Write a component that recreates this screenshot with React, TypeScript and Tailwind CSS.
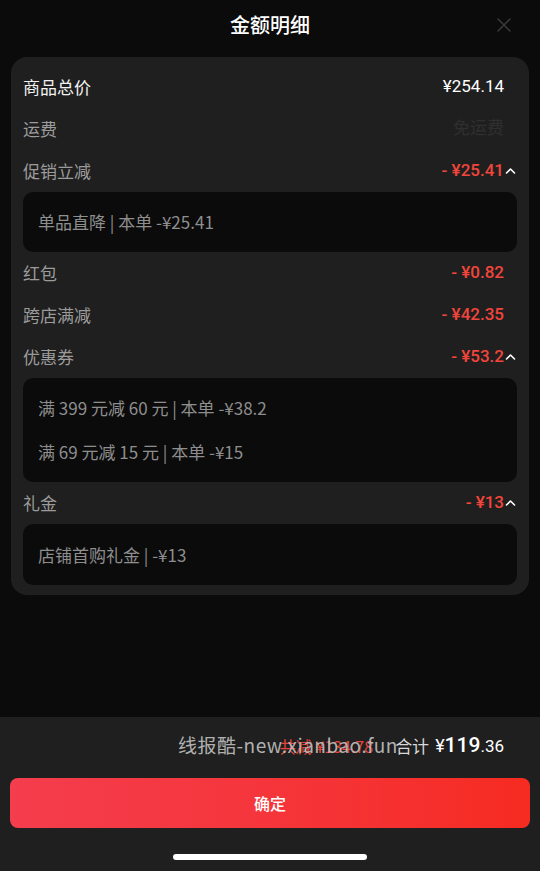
import { ReactNode } from "react";

const cjk = "font-['Noto_Sans_CJK_SC','Noto_Sans',sans-serif]";
const num = "font-['Roboto','Noto_Sans_CJK_SC',sans-serif]";

function Chevron() {
    return (
        <svg width="13" height="10" viewBox="0 0 13 10" className="shrink-0">
            <path d="M2.5 7 L6.5 3 L10.5 7" fill="none" stroke="#ffffff" strokeWidth="1.6" strokeLinecap="round" strokeLinejoin="round" />
        </svg>
    );
}

function Row({ label, value, strong, dim, red, open }: { label: string; value: string; strong?: boolean; dim?: boolean; red?: boolean; open?: boolean }) {
    return (
        <div className="h-[42px] flex items-center justify-between">
            <span className={`text-[17px] font-normal ${strong ? "text-[#f2f2f2]" : "text-[#9b9b9b]"}`}>{label}</span>
            <div className="flex items-center">
                <span
                    className={`${num} text-[17px] ${red ? "text-[#f2453b] font-medium" : dim ? "text-[#2f2f2f] " + cjk : "text-white"}`}
                >
                    {value}
                </span>
                {open ? <Chevron /> : <span className="w-[13px]" />}
            </div>
        </div>
    );
}

function Box({ children, className }: { children: ReactNode; className?: string }) {
    return (
        <div className={`rounded-[10px] bg-[#0b0b0b] px-[15px] text-[17px] text-[#8e8e8e] ${className ?? ""}`}>{children}</div>
    );
}

export default function App() {
    return (
        <div className={`${cjk} w-full h-[871px] bg-[#0b0b0b] flex flex-col overflow-hidden`}>
            {/* 标题 */}
            <div className="relative h-[50px] flex items-center justify-center">
                <h1 className="text-[20px] font-medium text-white">金额明细</h1>
                <svg className="absolute right-[28px] top-[17px]" width="16" height="16" viewBox="0 0 16 16">
                    <path d="M2 2 L14 14 M14 2 L2 14" stroke="#3a3a3a" strokeWidth="1.5" strokeLinecap="round" />
                </svg>
            </div>

            {/* 明细卡片 */}
            <div className="mx-[11px] mt-[7px] rounded-[16px] bg-[#1f1f1f] px-[12px] pt-[9px] pb-[10px]">
                <Row label="商品总价" value="¥254.14" strong />
                <Row label="运费" value="免运费" dim />
                <Row label="促销立减" value="- ¥25.41" red open />
                <Box className="h-[60px] flex items-center">单品直降 | 本单 -¥25.41</Box>
                <Row label="红包" value="- ¥0.82" red />
                <Row label="跨店满减" value="- ¥42.35" red />
                <Row label="优惠券" value="- ¥53.2" red open />
                <Box className="py-[8px]">
                    <div className="h-[44px] flex items-center">满 399 元减 60 元 | 本单 -¥38.2</div>
                    <div className="h-[44px] flex items-center">满 69 元减 15 元 | 本单 -¥15</div>
                </Box>
                <Row label="礼金" value="- ¥13" red open />
                <Box className="h-[61px] flex items-center">店铺首购礼金 | -¥13</Box>
            </div>

            <div className="flex-1" />

            {/* 底部结算 */}
            <div className="h-[154px] bg-[#1f1f1f] flex flex-col">
                <div className="relative h-[61px] flex items-center justify-end pr-[36px] pb-[4px]">
                    <span className="text-[16px] text-[#e5463c] mr-[22px]">共减 ¥134.78</span>
                    <span className="text-[17px] text-[#d8d8d8] mr-[6px]">合计</span>
                    <span className={`${num} text-white`}>
                        <span className="text-[18px]">¥</span>
                        <span className="text-[21px] font-medium">119</span>
                        <span className="text-[17px]">.36</span>
                    </span>
                    <span className="absolute left-[178px] top-[14px] text-[19px] text-[#c4c4c4]/90 tracking-[0.5px]">线报酷-new.xianbao.fun</span>
                </div>
                <div className="mx-[10px] h-[50px] rounded-[8px] bg-gradient-to-r from-[#f43d4d] to-[#f62b21] flex items-center justify-center">
                    <span className="text-[16px] font-medium text-white">确定</span>
                </div>
                <div className="flex-1 flex items-start justify-center pt-[26px]">
                    <div className="w-[194px] h-[6px] rounded-full bg-white" />
                </div>
            </div>
        </div>
    );
}
